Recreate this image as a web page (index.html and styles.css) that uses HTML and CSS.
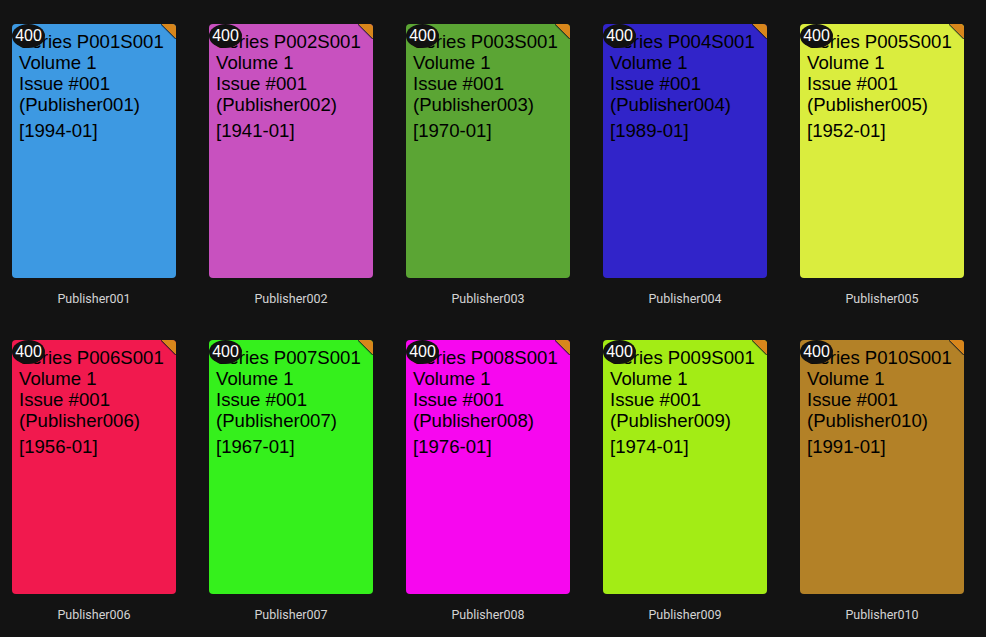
FILE: index.html
```html
<!DOCTYPE html>
<html>
<head>
<meta charset="utf-8">
<link rel="stylesheet" href="styles.css">
</head>
<body>
<div class="grid">
  <div class="item">
    <div class="card c1"><div class="title"><div>Series P001S001</div><div>Volume 1</div><div>Issue #001</div><div>(Publisher001)</div><div class="date">[1994-01]</div></div><span class="badge">400</span><span class="corner"></span></div>
    <div class="caption">Publisher001</div>
  </div>
  <div class="item">
    <div class="card c2"><div class="title"><div>Series P002S001</div><div>Volume 1</div><div>Issue #001</div><div>(Publisher002)</div><div class="date">[1941-01]</div></div><span class="badge">400</span><span class="corner"></span></div>
    <div class="caption">Publisher002</div>
  </div>
  <div class="item">
    <div class="card c3"><div class="title"><div>Series P003S001</div><div>Volume 1</div><div>Issue #001</div><div>(Publisher003)</div><div class="date">[1970-01]</div></div><span class="badge">400</span><span class="corner"></span></div>
    <div class="caption">Publisher003</div>
  </div>
  <div class="item">
    <div class="card c4"><div class="title"><div>Series P004S001</div><div>Volume 1</div><div>Issue #001</div><div>(Publisher004)</div><div class="date">[1989-01]</div></div><span class="badge">400</span><span class="corner"></span></div>
    <div class="caption">Publisher004</div>
  </div>
  <div class="item">
    <div class="card c5"><div class="title"><div>Series P005S001</div><div>Volume 1</div><div>Issue #001</div><div>(Publisher005)</div><div class="date">[1952-01]</div></div><span class="badge">400</span><span class="corner"></span></div>
    <div class="caption">Publisher005</div>
  </div>
  <div class="item">
    <div class="card c6"><div class="title"><div>Series P006S001</div><div>Volume 1</div><div>Issue #001</div><div>(Publisher006)</div><div class="date">[1956-01]</div></div><span class="badge">400</span><span class="corner"></span></div>
    <div class="caption">Publisher006</div>
  </div>
  <div class="item">
    <div class="card c7"><div class="title"><div>Series P007S001</div><div>Volume 1</div><div>Issue #001</div><div>(Publisher007)</div><div class="date">[1967-01]</div></div><span class="badge">400</span><span class="corner"></span></div>
    <div class="caption">Publisher007</div>
  </div>
  <div class="item">
    <div class="card c8"><div class="title"><div>Series P008S001</div><div>Volume 1</div><div>Issue #001</div><div>(Publisher008)</div><div class="date">[1976-01]</div></div><span class="badge">400</span><span class="corner"></span></div>
    <div class="caption">Publisher008</div>
  </div>
  <div class="item">
    <div class="card c9"><div class="title"><div>Series P009S001</div><div>Volume 1</div><div>Issue #001</div><div>(Publisher009)</div><div class="date">[1974-01]</div></div><span class="badge">400</span><span class="corner"></span></div>
    <div class="caption">Publisher009</div>
  </div>
  <div class="item">
    <div class="card c10"><div class="title"><div>Series P010S001</div><div>Volume 1</div><div>Issue #001</div><div>(Publisher010)</div><div class="date">[1991-01]</div></div><span class="badge">400</span><span class="corner"></span></div>
    <div class="caption">Publisher010</div>
  </div>
</div>
</body>
</html>
```
FILE: styles.css
```css
html, body {
  margin: 0;
  padding: 0;
  background: #131313;
}
.grid {
  display: grid;
  grid-template-columns: repeat(5, 164px);
  column-gap: 33px;
  row-gap: 34px;
  padding: 24px 12px;
}
.item {
  display: flex;
  flex-direction: column;
}
.card {
  position: relative;
  height: 254px;
  border-radius: 4px;
  overflow: hidden;
}
.title {
  padding: 7px 7px 0 7px;
  font-family: "Liberation Sans", Arial, sans-serif;
  font-size: 18.6px;
  line-height: 21px;
  color: #000;
  white-space: nowrap;
}
.date {
  margin-top: 5px;
}
.badge {
  position: absolute;
  top: 0;
  left: 0;
  width: 33px;
  height: 24px;
  border-radius: 50%;
  background: #111;
  color: #fff;
  font-family: "Liberation Sans", Arial, sans-serif;
  font-size: 16px;
  line-height: 24px;
  text-align: center;
}
.corner {
  position: absolute;
  top: 0;
  right: 0;
  width: 15px;
  height: 15px;
  background: linear-gradient(to bottom left, #d8861b 0, #d8861b 47%, rgba(30,30,30,0.75) 50%, rgba(0,0,0,0) 57%);
}
.caption {
  margin-top: 14px;
  font-family: Roboto, "Noto Sans", sans-serif;
  font-size: 12.5px;
  line-height: 14px;
  color: #d4d4d4;
  text-align: center;
}
.c1 { background: #3d99e2; }
.c2 { background: #c851bf; }
.c3 { background: #5ba534; }
.c4 { background: #3124c9; }
.c5 { background: #daed3e; }
.c6 { background: #f1194e; }
.c7 { background: #35f01c; }
.c8 { background: #f707ef; }
.c9 { background: #a3ec15; }
.c10 { background: #b38127; }
```
